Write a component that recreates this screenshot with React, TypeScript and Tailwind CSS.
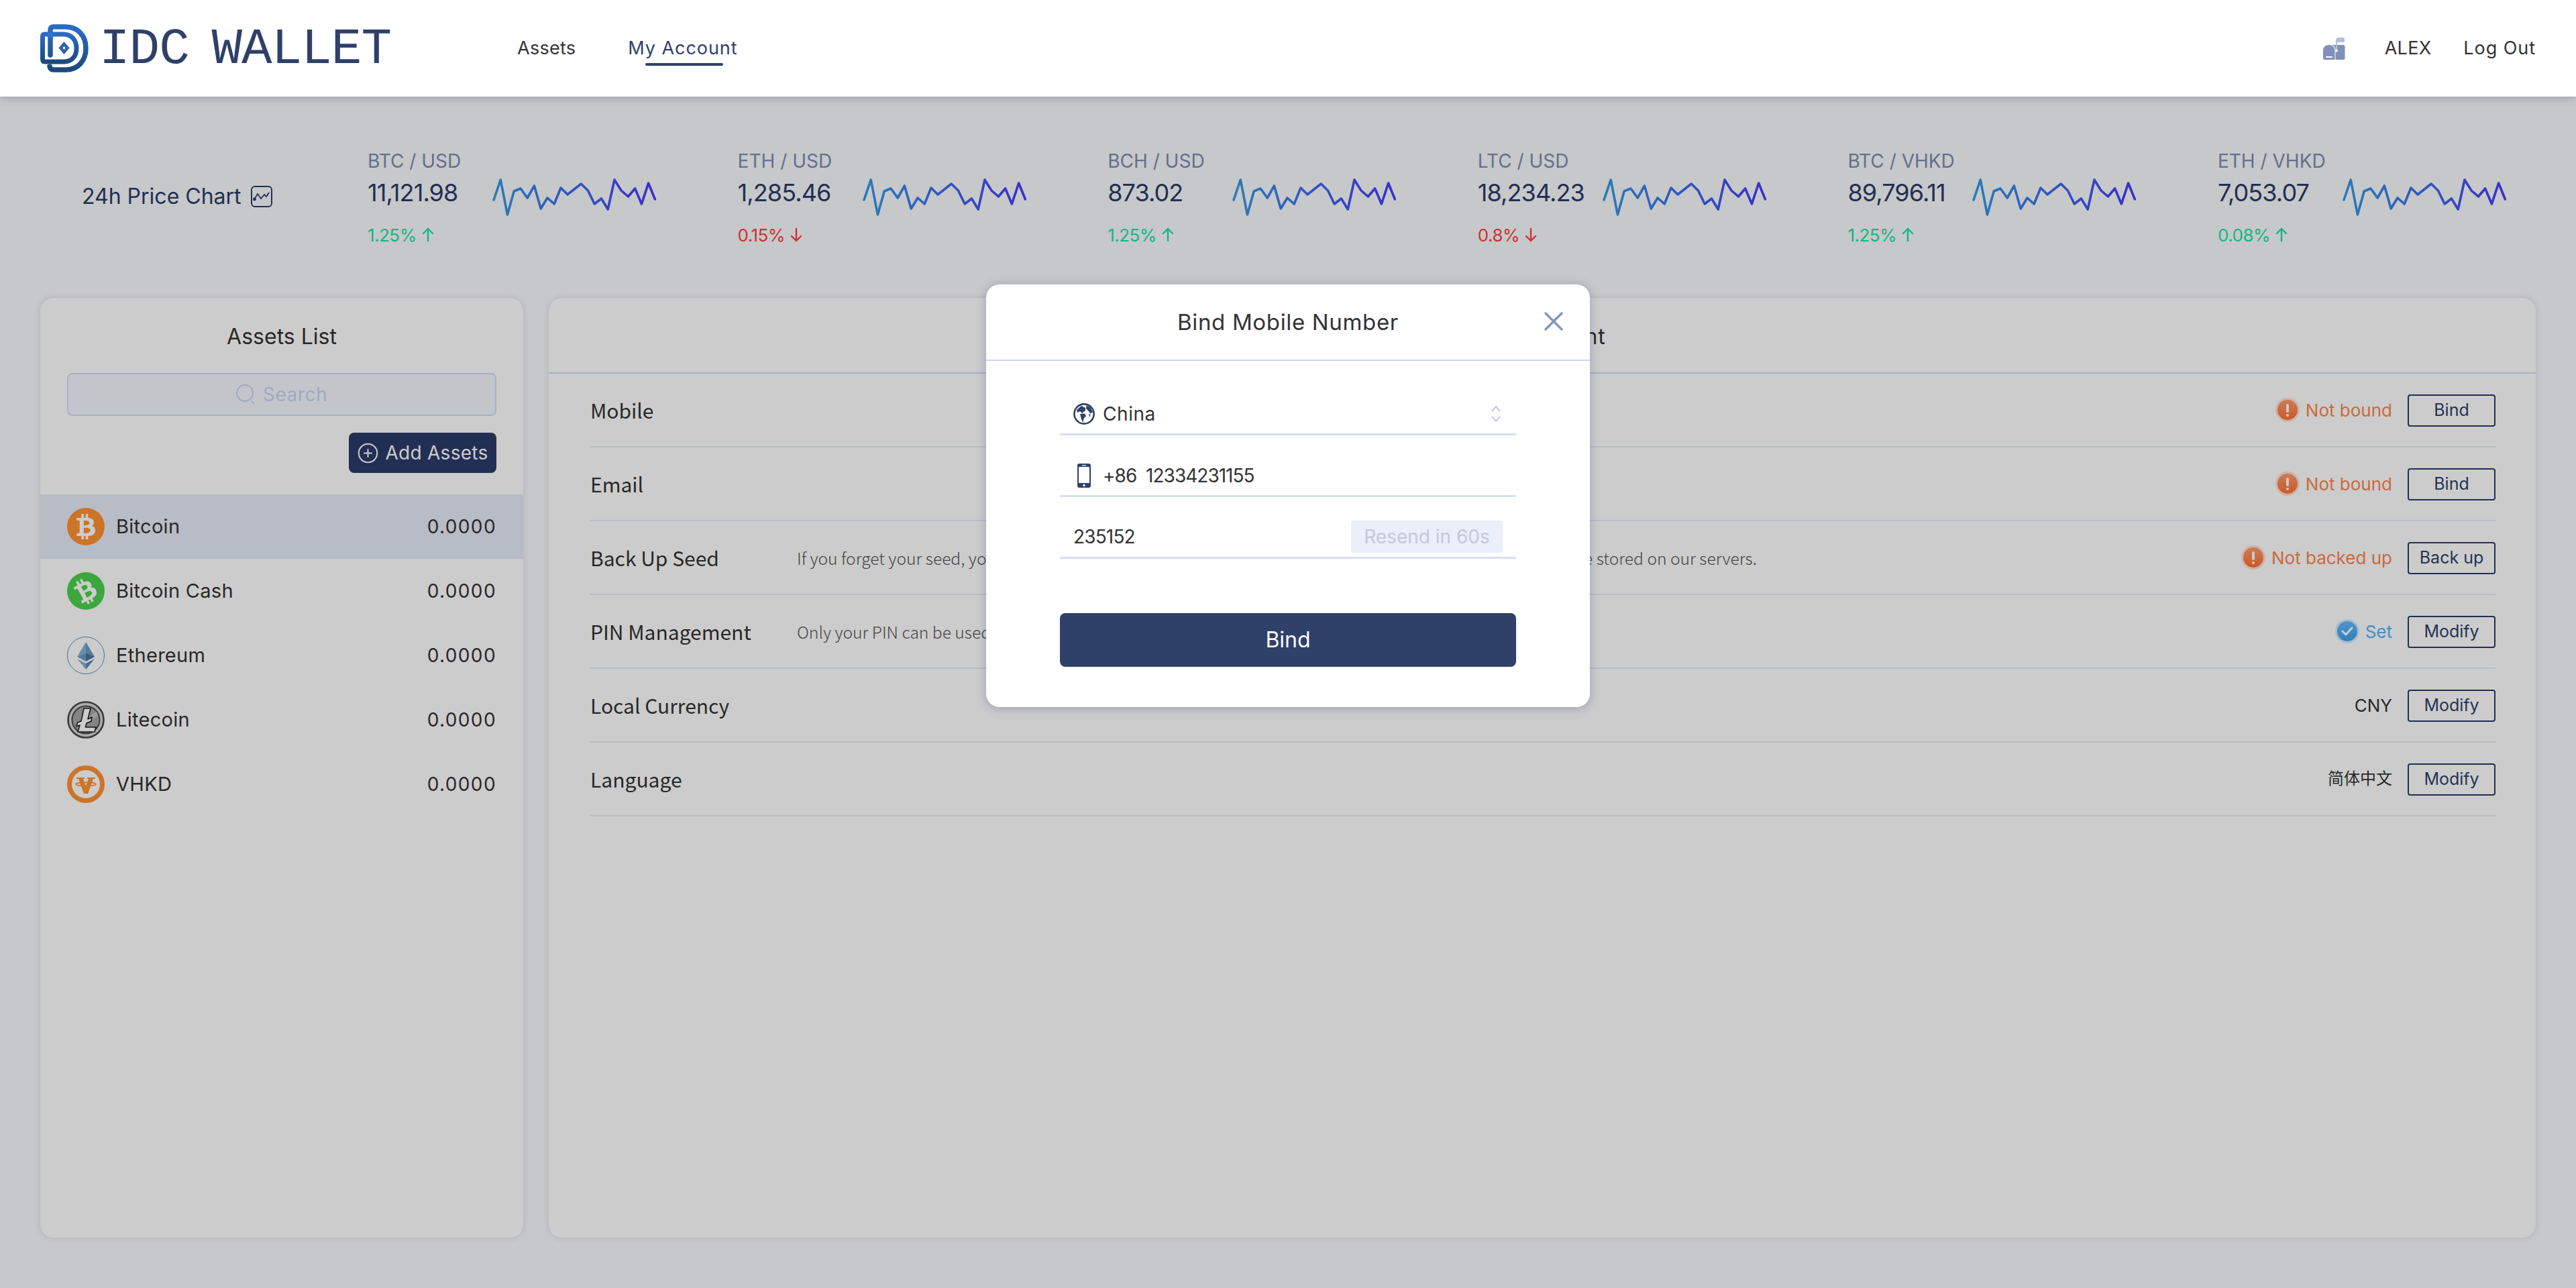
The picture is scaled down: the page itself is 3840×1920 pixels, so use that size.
import React from "react";
import { FaBtc } from "react-icons/fa";
import { CirclePlus } from "lucide-react";

const sparkPoints =
  "0,30 10.2,0 20.4,52 30.2,17 40,13 50.2,27 60.4,9 70.2,43 80,27 90.2,36 100,12 110,22 130.2,6 140.4,16 150.2,36 160.4,28 170.2,44 180,0 190,16 200.4,25 210.6,13 220.4,36 230.6,5 240.4,29";

const tickers = [
  { pair: "BTC / USD", price: "11,121.98", change: "1.25%", up: true },
  { pair: "ETH / USD", price: "1,285.46", change: "0.15%", up: false },
  { pair: "BCH / USD", price: "873.02", change: "1.25%", up: true },
  { pair: "LTC / USD", price: "18,234.23", change: "0.8%", up: false },
  { pair: "BTC / VHKD", price: "89,796.11", change: "1.25%", up: true },
  { pair: "ETH / VHKD", price: "7,053.07", change: "0.08%", up: true },
];

const Logo = () => (
  <svg width="72" height="72" viewBox="0 0 72 72" fill="none">
    <defs>
      <linearGradient id="logoGrad" x1="0" y1="0" x2="0" y2="1">
        <stop offset="0" stopColor="#2a6cc6" />
        <stop offset="1" stopColor="#1b4a80" />
      </linearGradient>
    </defs>
    <path d="M15 46 V9 Q15 4 20 4 H38 C56 4 68 17 68 36 C68 55 56 68 38 68 H20 Q15 68 14 63" stroke="url(#logoGrad)" strokeWidth="7.5" strokeLinecap="round" />
    <path d="M3.5 18 Q3.5 15 7 15 H34 C47 15 54 24 54 36 C54 48 47 56 34 56 H7 Q3.5 56 3.5 52 Z" stroke="url(#logoGrad)" strokeWidth="7" />
    <rect x="11.5" y="13" width="8" height="7" fill="#3273d0" />
    <path d="M35.5 26 L43.5 35.5 L35.5 45 L27.5 35.5 Z M35.5 33 L33.5 35.5 L35.5 38 L37.5 35.5 Z" fill="#2a62ae" fillRule="evenodd" />
  </svg>
);

const MailBox = () => (
  <svg width="33" height="33" viewBox="0 0 33 33">
    <path d="M8.5 11 C3.5 11 0 14.5 0 19 V31 Q0 33 2 33 H17.5 V19 C17.5 14.5 13.5 11 8.5 11 Z" fill="#8090b8" />
    <path d="M13 11 H30 Q32.5 11 32.5 14 V31 Q32.5 33 30.5 33 H18.5 V18 C18.5 15 16.5 12.5 13 11 Z" fill="#8090b8" />
    <rect x="4" y="28" width="10" height="2" rx="1" fill="#fff" />
    <rect x="19" y="3" width="2" height="16" fill="#b5bfd9" />
    <rect x="20" y="0" width="12" height="7" rx="1.5" fill="#b5bfd9" />
    <circle cx="20" cy="19.5" r="2" fill="#fff" />
  </svg>
);

const PriceChartIcon = () => (
  <svg width="32" height="32" viewBox="0 0 32 32" fill="none" stroke="#2b3b6a" strokeWidth="2">
    <rect x="1" y="1" width="30" height="30" rx="5" />
    <path d="M5 20 L10 12 L15 19 L20 13 L23 16 L27 10" strokeWidth="1.8" />
    <circle cx="5.5" cy="20" r="1.4" fill="#2b3b6a" />
  </svg>
);

const Sparkline = ({ id }: { id: string }) => (
  <svg width="244" height="58" viewBox="-2 -3 244 58" fill="none">
    <defs>
      <linearGradient id={id} gradientUnits="userSpaceOnUse" x1="0" y1="0" x2="240" y2="0">
        <stop offset="0" stopColor="#359be6" />
        <stop offset="1" stopColor="#483bff" />
      </linearGradient>
    </defs>
    <polyline points={sparkPoints} stroke={`url(#${id})`} strokeWidth="3.6" strokeLinecap="round" strokeLinejoin="round" />
  </svg>
);

const ArrowChange = ({ up }: { up: boolean }) => (
  <svg width="18" height="22" viewBox="0 0 18 22" fill="none" stroke="currentColor" strokeWidth="2.4" strokeLinecap="round" strokeLinejoin="round">
    {up ? <path d="M9 20 V2 M2 9 L9 2 L16 9" /> : <path d="M9 2 V20 M2 13 L9 20 L16 13" />}
  </svg>
);

const CoinCircle = ({ bg, rotate }: { bg: string; rotate: string }) => (
  <div className={`w-14 h-14 rounded-full flex items-center justify-center shrink-0 ${bg}`}>
    <FaBtc className={`text-white text-[38px] ${rotate}`} />
  </div>
);

const EthIcon = () => (
  <svg width="56" height="56" viewBox="0 0 56 56" className="shrink-0">
    <circle cx="28" cy="28" r="27.5" fill="none" stroke="#5f8cb0" strokeWidth="1" />
    <polygon points="28,8 15,30 28,24" fill="#86b2d8" />
    <polygon points="28,8 41,30 28,24" fill="#6c9cc4" />
    <polygon points="28,24 15,30 28,37" fill="#6c9cc4" />
    <polygon points="28,24 41,30 28,37" fill="#47759f" />
    <polygon points="15,33 28,49 28,40" fill="#86b2d8" />
    <polygon points="41,33 28,49 28,40" fill="#5a8ab3" />
  </svg>
);

const LtcIcon = () => (
  <svg width="56" height="56" viewBox="0 0 56 56" className="shrink-0">
    <circle cx="28" cy="28" r="26.5" fill="#d8d8d8" stroke="#4a4a4a" strokeWidth="2.6" />
    <circle cx="28" cy="28" r="20.5" fill="#a6a6a6" stroke="#4a4a4a" strokeWidth="2" />
    <path d="M14 34 L44 16 L46 22 L18 42 Z" fill="#c4c4c4" />
    <polygon points="25,11 35,11 31,27 37,24 36,30 29,33 27.5,39 43,39 41,46 16,46 19,36 14,38 15.5,32 21,30" fill="#fff" stroke="#1c1c1c" strokeWidth="1.6" strokeLinejoin="round" />
  </svg>
);

const VhkdIcon = () => (
  <svg width="56" height="56" viewBox="0 0 56 56" className="shrink-0">
    <circle cx="28" cy="28" r="24.5" fill="none" stroke="#ff9233" strokeWidth="7" />
    <polygon points="14,18 26,18 26,20 24,20 28,31 32,20 30,20 30,18 42,18 42,20 39,20 31,42 25,42 17,20 14,20" fill="#ff9233" />
    <ellipse cx="28" cy="28" rx="15" ry="2.6" fill="none" stroke="#ff9233" strokeWidth="1.6" />
  </svg>
);

const assets = [
  { name: "Bitcoin", icon: <CoinCircle bg="bg-[#ff9233]" rotate="rotate-0" />, active: true },
  { name: "Bitcoin Cash", icon: <CoinCircle bg="bg-[#4cd14b]" rotate="-rotate-[28deg]" />, active: false },
  { name: "Ethereum", icon: <EthIcon />, active: false },
  { name: "Litecoin", icon: <LtcIcon />, active: false },
  { name: "VHKD", icon: <VhkdIcon />, active: false },
];

const WarnBadge = () => (
  <div className="w-9 h-9 rounded-full bg-[#ff844a]/25 flex items-center justify-center shrink-0">
    <div className="w-[30px] h-[30px] rounded-full bg-gradient-to-b from-[#ff9a6c] to-[#ff6f30] flex flex-col items-center justify-center gap-[2px]">
      <div className="w-[4px] h-[13px] rounded-full bg-white" />
      <div className="w-[4px] h-[4px] rounded-full bg-white" />
    </div>
  </div>
);

const CheckBadge = () => (
  <div className="w-9 h-9 rounded-full bg-[#4fb4ff]/25 flex items-center justify-center shrink-0">
    <div className="w-[30px] h-[30px] rounded-full bg-gradient-to-b from-[#62bcff] to-[#3b9fe8] flex items-center justify-center">
      <svg width="20" height="16" viewBox="0 0 20 16" fill="none" stroke="#fff" strokeWidth="3" strokeLinecap="round" strokeLinejoin="round">
        <path d="M3 8 L8 13 L17 3" />
      </svg>
    </div>
  </div>
);

const rows = [
  { label: "Mobile", desc: "", status: "Not bound", kind: "warn", action: "Bind" },
  { label: "Email", desc: "", status: "Not bound", kind: "warn", action: "Bind" },
  {
    label: "Back Up Seed",
    desc: "If you forget your seed, you will lose access to your wallet and assets. Please keep it safe, as seeds will not be stored on our servers.",
    status: "Not backed up",
    kind: "warn",
    action: "Back up",
  },
  { label: "PIN Management", desc: "Only your PIN can be used to confirm a transfer.", status: "Set", kind: "ok", action: "Modify" },
  { label: "Local Currency", desc: "", status: "CNY", kind: "plain", action: "Modify" },
  { label: "Language", desc: "", status: "简体中文", kind: "cjk", action: "Modify" },
];

const GlobeIcon = () => (
  <svg width="32" height="32" viewBox="0 0 32 32" className="shrink-0">
    <circle cx="16" cy="16" r="14.6" fill="#fff" stroke="#2f4069" strokeWidth="2.6" />
    <path d="M5 10 L12 4 L18 7 L18 11 L13 15 L10 12 L6 14 Z" fill="#2f4069" />
    <path d="M10 16 L17 15.5 L19 19 L15.5 23 L14.5 29 L12 24 Z" fill="#2f4069" />
    <path d="M19.5 3.5 L25 6 L29 13 L25.5 15.5 L22 11 L19 8 Z" fill="#2f4069" />
    <path d="M23 17 L25.5 16 L24.5 21 Z" fill="#2f4069" />
  </svg>
);

const PhoneIcon = () => (
  <svg width="20" height="36" viewBox="0 0 20 36" className="shrink-0">
    <rect width="20" height="36" rx="3" fill="#2f4069" />
    <rect x="2" y="5" width="16" height="24" fill="#fff" />
    <rect x="7" y="2" width="6" height="1.6" fill="#c8d0e4" />
    <circle cx="10" cy="32.5" r="1.7" fill="#fff" />
  </svg>
);

const App = () => {
  return (
    <div className="relative h-[1920px] overflow-hidden flex flex-col bg-[#f9fafc] text-[#333] font-['Inter','Noto_Sans_CJK_SC',sans-serif]">
      <header className="relative z-20 h-[144px] shrink-0 bg-white flex items-center pl-[60px] pr-[60px] shadow-[0_2px_12px_rgba(47,64,105,0.3)]">
        <div className="w-[711px] shrink-0 flex items-center gap-[16px]">
          <Logo />
          <span className="pt-[4px] font-['Liberation_Mono',monospace] text-[76px] leading-none tracking-[-1px] [word-spacing:-11px] text-[#2f4069]">IDC WALLET</span>
        </div>
        <nav className="flex items-center gap-[78px] text-[27px] tracking-[0.01em]">
          <span>Assets</span>
          <span className="relative text-[#2f4069] tracking-[0.035em]">
            My Account
            <span className="absolute left-[26px] top-[42px] w-[116px] h-[4px] rounded-full bg-[#2f4069]" />
          </span>
        </nav>
        <div className="ml-auto flex items-center text-[27px]">
          <MailBox />
          <span className="ml-[59px] tracking-[0.01em]">ALEX</span>
          <span className="ml-[48px] tracking-[0.035em]">Log Out</span>
        </div>
      </header>

      <section className="h-[300px] shrink-0 pl-[122px] pt-[78px] flex">
        <div className="w-[426px] shrink-0 h-[142px] flex items-center gap-[14px] text-[32px] text-[#2b3b6a]">
          <span>24h Price Chart</span>
          <PriceChartIcon />
        </div>
        <div className="grid grid-cols-[repeat(5,551.6px)_auto]">
          {tickers.map((t, i) => (
            <div key={t.pair} className="flex">
              <div className="w-[186px] shrink-0 flex flex-col whitespace-nowrap">
                <span className="h-[36px] leading-[36px] text-[28px] text-[#7e8bb4]">{t.pair}</span>
                <span className="mt-[7px] h-[44px] leading-[44px] text-[36px] text-[#2b3b6a] tracking-[-0.025em]">{t.price}</span>
                <span className={`mt-[23px] h-[36px] flex items-center gap-[8px] text-[26px] tracking-[-0.02em] ${t.up ? "text-[#17e6a4]" : "text-[#ff4040]"}`}>
                  {t.change}
                  <ArrowChange up={t.up} />
                </span>
              </div>
              <div className="mt-[43px]">
                <Sparkline id={`spark${i}`} />
              </div>
            </div>
          ))}
        </div>
      </section>

      <main className="flex-1 min-h-0 flex gap-[38px] px-[60px] pb-[75px]">
        <aside className="w-[720px] shrink-0 bg-white rounded-[20px] shadow-[0_0_10px_rgba(47,64,105,0.15)] overflow-hidden">
          <h2 className="h-[112px] pt-[4px] flex items-center justify-center text-[32px]">Assets List</h2>
          <div className="mx-[40px] h-[64px] rounded-[8px] border-2 border-[#cfdefb] bg-[#f5f7fd] flex items-center justify-center gap-[12px] text-[28px] text-[#c8d6f2] tracking-[0.02em]">
            <svg width="28" height="30" viewBox="0 0 28 30" fill="none" stroke="#c8d6f2" strokeWidth="2">
              <circle cx="13" cy="13" r="12" />
              <path d="M23 25 L27 29" strokeWidth="2.4" />
            </svg>
            <span>Search</span>
          </div>
          <div className="mx-[40px] mt-[25px] flex justify-end">
            <button className="w-[220px] h-[60px] rounded-[8px] bg-[#2b3b6a] text-white text-[28px] tracking-[0.01em] flex items-center justify-center gap-[9px]">
              <CirclePlus size={33} strokeWidth={1.5} />
              Add Assets
            </button>
          </div>
          <ul className="mt-[32px]">
            {assets.map((a) => (
              <li key={a.name} className={`h-[96px] px-[40px] flex items-center text-[29px] ${a.active ? "bg-[#e7ebf9]" : ""}`}>
                {a.icon}
                <span className="ml-[17px] tracking-[0.01em]">{a.name}</span>
                <span className="ml-auto text-[28px] tracking-[0.05em]">0.0000</span>
              </li>
            ))}
          </ul>
        </aside>

        <div className="flex-1 min-w-0 bg-white rounded-[20px] shadow-[0_0_10px_rgba(47,64,105,0.15)] overflow-hidden">
          <h2 className="h-[113px] pt-[4px] flex items-center justify-center text-[32px] tracking-[0.02em] border-b-2 border-[#cfdefb]">My Account</h2>
          <div className="ml-[62px] mr-[60px]">
            {rows.map((r) => (
              <div key={r.label} className="h-[110px] flex items-center border-b-2 border-[#e7ebfe] whitespace-nowrap">
                <span className="w-[308px] shrink-0 font-['Noto_Sans_CJK_SC',sans-serif] text-[30px]">{r.label}</span>
                <span className="font-['Noto_Sans_CJK_SC',sans-serif] font-light text-[24.6px] text-[#555]">{r.desc}</span>
                <div className="ml-auto flex items-center gap-[9px] text-[26px]">
                  {r.kind === "warn" && <WarnBadge />}
                  {r.kind === "ok" && <CheckBadge />}
                  <span
                    className={
                      r.kind === "warn"
                        ? "text-[#ff844a]"
                        : r.kind === "ok"
                          ? "text-[#4fb4ff]"
                          : r.kind === "cjk"
                            ? "text-[#333] text-[24px]"
                            : "text-[#333]"
                    }
                  >
                    {r.status}
                  </span>
                </div>
                <button className="ml-[23px] mt-[2px] w-[131px] h-[48px] rounded-[4px] border-2 border-[#2b3b6a] text-[25px] text-[#2f4069] flex items-center justify-center">
                  {r.action}
                </button>
              </div>
            ))}
          </div>
        </div>
      </main>

      <div className="absolute inset-0 z-10 bg-black/20 flex justify-center pt-[424px]">
        <div className="w-[900px] h-[630px] bg-white rounded-[20px] shadow-[0_2px_16px_rgba(47,64,105,0.3)]">
          <div className="relative h-[114px] border-b-2 border-[#ccd6ef] flex items-center justify-center text-[33px] tracking-[0.02em] pt-[2px]">
            Bind Mobile Number
            <svg className="absolute right-[40px] top-[41px]" width="28" height="28" viewBox="0 0 28 28" fill="none" stroke="#8494bd" strokeWidth="3.4" strokeLinecap="round">
              <path d="M2 2 L26 26 M26 2 L2 26" />
            </svg>
          </div>
          <div className="px-[110px] pt-[19px]">
            <div className="h-[92px] border-b-[3px] border-[#d8deee] flex items-center pl-[20px] pt-[38px] pb-[8px] text-[28px]">
              <GlobeIcon />
              <span className="ml-[12px] tracking-[0.02em]">China</span>
              <svg className="ml-auto mr-[22px]" width="16" height="26" viewBox="0 0 16 26" fill="none" stroke="#c3c8dc" strokeWidth="2">
                <path d="M2 9 L8 2 L14 9 M2 17 L8 24 L14 17" />
              </svg>
            </div>
            <div className="h-[92px] border-b-[3px] border-[#d8deee] flex items-center pl-[26px] pt-[36px] pb-[6px] text-[28px]">
              <PhoneIcon />
              <span className="ml-[18px] whitespace-pre tracking-[-0.035em]">+86  12334231155</span>
            </div>
            <div className="h-[92px] border-b-[3px] border-[#d8deee] flex items-center pl-[20px] pr-[20px] pt-[31px] pb-[2px] text-[28px]">
              <span className="tracking-[-0.03em]">235152</span>
              <span className="ml-auto w-[226px] h-[48px] rounded-[4px] bg-[#eaeffa] text-[#c3c8dc] text-[28px] flex items-center justify-center whitespace-nowrap">Resend in 60s</span>
            </div>
            <button className="mt-[81px] w-full h-[80px] rounded-[8px] bg-[#2f4069] text-white text-[32px]">Bind</button>
          </div>
        </div>
      </div>
    </div>
  );
};

export default App;
